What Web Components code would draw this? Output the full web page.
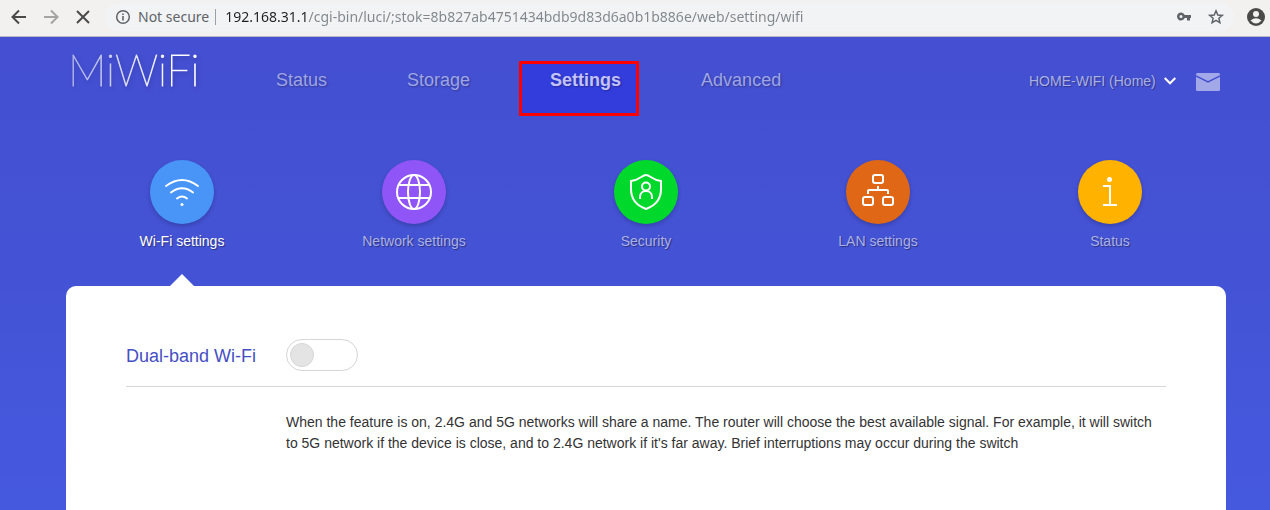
<!DOCTYPE html>
<html lang="en">
<head>
<meta charset="utf-8">
<meta name="viewport" content="width=device-width, initial-scale=1">
<title>MiWiFi - Wi-Fi settings</title>
<style>
  body {
    margin: 0;
    min-height: 100vh;
    display: flex;
    flex-direction: column;
    font: 14px/20px "Liberation Sans", Arial, sans-serif;
    background: #444fd0;
  }
</style>
</head>
<body>
<browser-bar></browser-bar>
<router-page>
  <site-header slot="header">
    <nav-item>Status</nav-item>
    <nav-item>Storage</nav-item>
    <nav-item current>Settings</nav-item>
    <nav-item>Advanced</nav-item>
  </site-header>
  <section-tab slot="tabs" current style="--disc:#4894f7">
    <svg slot="icon" width="64" height="64" viewBox="0 0 64 64" fill="none" stroke="#fff" stroke-width="2" stroke-linecap="round"><path d="M16 26Q32 14 48 26M21 32.500Q32 24 43 32.500M27 38.500Q32 34.500 37 38.500"/><circle cx="32" cy="44.500" r="1.500" fill="#fff" stroke="none"/></svg>
    Wi-Fi settings
  </section-tab>
  <section-tab slot="tabs" style="--disc:#8f55f7">
    <svg slot="icon" width="64" height="64" viewBox="0 0 64 64" fill="none" stroke="#fff" stroke-width="2"><circle cx="32" cy="32" r="17"/><ellipse cx="32" cy="32" rx="6" ry="17"/><path d="M16 25H48M16 38H48"/></svg>
    Network settings
  </section-tab>
  <section-tab slot="tabs" style="--disc:#00d92b">
    <svg slot="icon" width="64" height="64" viewBox="0 0 64 64" fill="none" stroke="#fff" stroke-width="2" stroke-linejoin="round"><path d="M32 15C28 15 26 20 17 21V29C17 38 21 45 32 49C43 45 47 38 47 29V21C38 20 36 15 32 15Z"/><circle cx="32" cy="26.500" r="4"/><path d="M26 39V37C26 29 38 29 38 37V39"/></svg>
    Security
  </section-tab>
  <section-tab slot="tabs" style="--disc:#df6716">
    <svg slot="icon" width="64" height="64" viewBox="0 0 64 64" fill="none" stroke="#fff" stroke-width="2"><rect x="27" y="15" width="10" height="8" rx="2"/><rect x="17" y="37" width="10" height="8" rx="2"/><rect x="37" y="37" width="10" height="8" rx="2"/><path d="M32 26V30M22 34V31Q22 30 23 30H41Q42 30 42 31V34"/></svg>
    LAN settings
  </section-tab>
  <section-tab slot="tabs" style="--disc:#ffb200">
    <svg slot="icon" width="64" height="64" viewBox="0 0 64 64" fill="none" stroke="#fff" stroke-width="2"><circle cx="31.500" cy="19.500" r="2.500" fill="#fff" stroke="none"/><path d="M25 26H32V45M25 45H39"/></svg>
    Status
  </section-tab>
  <setting-row>
    Dual-band Wi-Fi
    <span slot="help">When the feature is on, 2.4G and 5G networks will share a name. The router will choose the best available signal. For example, it will switch to 5G network if the device is close, and to 2.4G network if it's far away. Brief interruptions may occur during the switch</span>
  </setting-row>
</router-page>

<script>
const define = (name, html) => customElements.define(name, class extends HTMLElement {
  constructor() {
    super();
    this.attachShadow({ mode: "open" }).innerHTML = html;
  }
});

define("browser-bar", `
<style>
  :host { display: flex; align-items: center; padding: 0 4px 0 9px; background: #f2f1ef; border-bottom: 1px solid #b9b9c4; box-sizing: border-box; height: 37px; font-family: "Noto Sans", sans-serif; color: #5f6368; }
  button { display: block; border: 0; padding: 0; background: none; color: #4a4a4a; width: 20px; height: 20px; }
  svg { display: block; }
  .nav { display: flex; gap: 12px; padding-bottom: 2px; }
  .bar { flex: 1; display: flex; align-items: center; height: 28px; border-radius: 14px; background: #f1f3f5; margin: 0 12px 2px 12px; padding: 0 8px 0 10px; color: #5f6368; }
  .bar button { color: #5f6368; }
  .secure { font-size: 14px; line-height: 20px; margin-left: 7px; }
  .rule { width: 1px; height: 16px; background: #9aa0a6; margin: 0 9px 0 6px; }
  input { flex: 1; min-width: 0; border: 0; padding: 0; outline: 0; font: 14px/20px "Noto Sans", sans-serif; color: transparent; background: linear-gradient(90deg, #202124 82px, #80868b 82px); -webkit-background-clip: text; background-clip: text; }
  .tools { display: flex; gap: 12px; }
</style>
<div class="nav">
  <button aria-label="Back"><svg width="20" height="20" viewBox="0 0 20 20" fill="none" stroke="currentColor" stroke-width="2"><path d="M17 10H4M10 3.500L3.500 10L10 16.500"/></svg></button>
  <button aria-label="Forward" style="color:#a5a4a3"><svg width="20" height="20" viewBox="0 0 20 20" fill="none" stroke="currentColor" stroke-width="2"><path d="M3 10H16M10 3.500L16.500 10L10 16.500"/></svg></button>
  <button aria-label="Stop"><svg width="20" height="20" viewBox="0 0 20 20" fill="none" stroke="currentColor" stroke-width="2"><path d="M4 4L16 16M16 4L4 16"/></svg></button>
</div>
<div class="bar">
  <svg width="16" height="16" viewBox="0 0 16 16" fill="none" stroke="currentColor"><circle cx="8" cy="8" r="6.300" stroke-width="1.500"/><path d="M8 7V11.500M8 4.500V6" stroke-width="1.600"/></svg>
  <span class="secure">Not secure</span><span class="rule"></span>
  <input aria-label="Address" spellcheck="false" value="192.168.31.1/cgi-bin/luci/;stok=8b827ab4751434bdb9d83d6a0b1b886e/web/setting/wifi">
  <div class="tools">
    <button aria-label="Passwords"><svg width="20" height="20" viewBox="0 0 20 20"><path fill="currentColor" fill-rule="evenodd" d="M10.700 8H17V11H16V13.500H13V11H10.700A4 4 0 1 1 10.700 8ZM7 8A1.500 1.500 0 1 0 7 11A1.500 1.500 0 1 0 7 8Z"/></svg></button>
    <button aria-label="Bookmark"><svg width="20" height="20" viewBox="0 0 20 20" fill="none" stroke="currentColor" stroke-width="1.500"><path d="M10 3.800L11.800 8L16.300 8.400L12.900 11.300L13.900 15.700L10 13.400L6.100 15.700L7.100 11.300L3.700 8.400L8.200 8Z"/></svg></button>
  </div>
</div>
<button aria-label="Profile"><svg width="20" height="20" viewBox="0 0 20 20"><circle cx="10" cy="9" r="9" fill="#4a4a4a"/><circle cx="10" cy="6" r="3" fill="#f2f1ef"/><path d="M4.500 12.500Q10 7.800 15.500 12.500Q10 18.500 4.500 12.500Z" fill="#f2f1ef"/></svg></button>
`);

define("router-page", `
<style>
  :host { flex: 1; display: flex; flex-direction: column; padding: 0 44px 0 66px; background: linear-gradient(#444fd1, #4453d5 50%, #4559df); }
  .tabs { display: grid; grid-template-columns: repeat(5, 1fr); padding-top: 37px; }
  main { flex: 1; padding: 48px 60px 40px; background: #fff; border-radius: 10px 10px 0 0; }
</style>
<slot name="header"></slot>
<nav class="tabs" aria-label="Settings sections"><slot name="tabs"></slot></nav>
<main><slot></slot></main>
`);

define("site-header", `
<style>
  :host { display: flex; align-items: center; height: 86px; padding: 0 6px 0 2px; color: rgba(255, 255, 255, .5); }
  .logo { width: 168px; margin-bottom: 20px; font: 100 43px/48px Lato, sans-serif; text-decoration: none; color: transparent; -webkit-text-stroke: 1px transparent; background: linear-gradient(90deg, rgba(255,255,255,.55), #fff 110px); -webkit-background-clip: text; background-clip: text; filter: drop-shadow(1px 2px 2px rgba(0, 0, 60, .25)); }
  nav { flex: 1; display: flex; }
  .network { position: relative; display: flex; align-items: center; padding-top: 2px; }
  select { appearance: none; border: 0; margin: 0; padding: 0 20px 0 0; background: none; color: #a9b0e6; font: inherit; text-shadow: 1px 1px 1px rgba(0, 0, 0, .35); }
  option { color: #333; }
  .chevron { position: absolute; right: 0; pointer-events: none; }
  .mail { display: block; border: 0; padding: 0; margin: 3px 0 0 20px; background: none; }
  svg { display: block; }
</style>
<a class="logo" href="#home">MiWiFi</a>
<nav aria-label="Main"><slot></slot></nav>
<div class="network">
  <select aria-label="Network"><option>HOME-WIFI (Home)</option></select>
  <svg class="chevron" width="12" height="8" viewBox="0 0 12 8" fill="none" stroke="#fff" stroke-width="2"><path d="M.7 1L6 6.300L11.300 1"/></svg>
</div>
<button class="mail" aria-label="Messages"><svg width="24" height="18" viewBox="0 0 24 18"><rect width="24" height="18" rx="1.500" fill="#a3a8e9"/><path d="M0 3L12 9L24 3" fill="none" stroke="#4450d1" stroke-width="1.500"/></svg></button>
`);

define("nav-item", `
<style>
  :host { display: block; position: relative; }
  a { display: block; position: relative; padding: 0 40px; font-size: 18px; line-height: 24px; color: #9ea5e6; text-decoration: none; text-shadow: 1px 1px 2px rgba(0, 0, 0, .3); }
  :host([current]) a { color: #c3c2fa; font-weight: bold; }
  :host([current])::before { content: ""; position: absolute; inset: -7px 22px -24px 9px; border: 3px solid #f00; background: #323ddc; }
</style>
<a href="#section"><slot></slot></a>
`);

define("section-tab", `
<style>
  :host { display: block; position: relative; }
  a { display: flex; flex-direction: column; align-items: center; padding-bottom: 35px; color: #abb1e7; text-decoration: none; text-shadow: 1px 1px 1px rgba(0, 0, 0, .4); }
  .disc { width: 64px; height: 64px; margin-bottom: 7px; border-radius: 50%; background: var(--disc); box-shadow: 0 2px 4px rgba(0, 0, 0, .2); }
  ::slotted(svg) { display: block; }
  :host([current]) a { color: #fff; }
  :host([current])::after { content: ""; position: absolute; bottom: 0; left: calc(50% - 12px); border: 12px solid transparent; border-top: 0; border-bottom-color: #fff; }
</style>
<a href="#tab"><span class="disc"><slot name="icon"></slot></span><span><slot></slot></span></a>
`);

define("setting-row", `
<style>
  :host { display: grid; grid-template-columns: 160px 1fr; color: #333; }
  .row { grid-column: 1 / 3; display: grid; grid-template-columns: subgrid; align-items: center; padding: 5px 0 15px; border-bottom: 1px solid #d6d6d6; }
  label { padding-top: 2px; font-size: 18px; line-height: 24px; color: #454fc4; }
  input { appearance: none; display: flex; align-items: center; box-sizing: border-box; width: 72px; height: 32px; margin: 0; padding: 0 3px; border: 1px solid #d6d6d6; border-radius: 16px; background: #fff; }
  input::before { content: ""; box-sizing: border-box; width: 24px; height: 24px; border: 1px solid #d6d6d6; border-radius: 50%; background: #e4e4e4; }
  input:checked { justify-content: flex-end; }
  p { grid-column: 2; margin: 25px 0 0; line-height: 21px; }
</style>
<div class="row"><label for="switch"><slot></slot></label><input id="switch" type="checkbox" role="switch"></div>
<p><slot name="help"></slot></p>
`);
</script>
</body>
</html>
